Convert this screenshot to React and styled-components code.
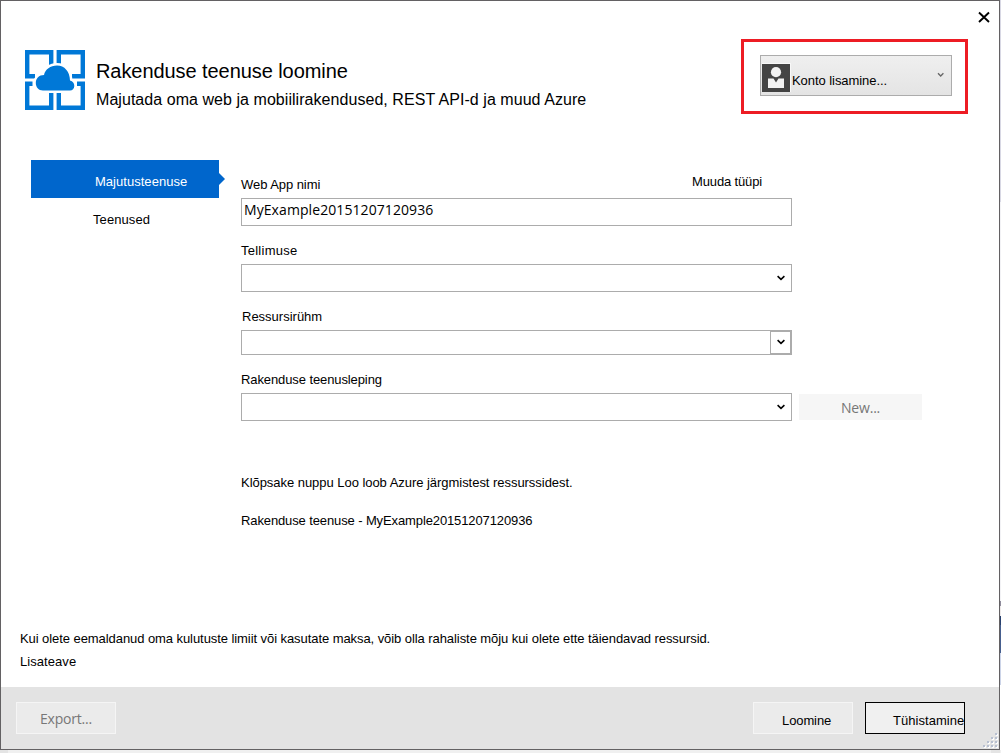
import React from "react";
import styled, { createGlobalStyle } from "styled-components";

const GlobalStyle = createGlobalStyle`
  * { box-sizing: border-box; }
  body { margin: 0; background: #f0f0f0; overflow: hidden; }
`;

const Screen = styled.div`
  display: grid;
  grid-template-columns: 1000px 1px;
  grid-template-rows: 750px 3px;
  width: 1001px;
  height: 753px;
  background: #f0f0f0;
  font-family: "Liberation Sans", Arial, sans-serif;
  font-size: 13px;
  color: #000;
`;

const Dialog = styled.main`
  display: flex;
  flex-direction: column;
  border: 1px solid #636163;
  background: #fff;
  position: relative;
`;

const BackdropEdge = styled.div`
  background: linear-gradient(
    #d8d8e4 0 202px, #f2f2f5 202px 601px, #8f8c9c 601px 606px, #eeeaea 606px 616px,
    #29416f 616px 625px, #465f8f 625px 653px, #ccd4e8 653px 685px, #fff 685px
  );
`;

const BackdropBottom = styled.div`
  border-left: 8px solid #e4e4e4;
  border-right: 9px solid #e4e4e4;
  background: #f0f0f0;
`;

const Text = styled.span`
  display: block;
  white-space: pre;
  line-height: ${(p) => p.$line || 16}px;
  font-size: ${(p) => p.$size || 13}px;
  letter-spacing: ${(p) => p.$track || 0}px;
`;

const Title = styled(Text)`
  margin: 0;
  font-weight: 400;
`;

const Segoe = styled(Text)`
  font-family: "Open Sans", "Noto Sans", sans-serif;
  color: ${(p) => p.$color || "#000"};
`;

const Header = styled.header`
  display: flex;
  align-items: flex-start;
  height: 159px;
  padding-left: 24px;
`;

const Logo = styled.svg`
  width: 60px;
  height: 60px;
  margin-top: 49px;
`;

const Heading = styled.div`
  display: flex;
  flex-direction: column;
  gap: 7px;
  margin: 58px 0 0 11px;
`;

const AccountFrame = styled.div`
  width: 227px;
  height: 75px;
  margin: 38px 31px 0 auto;
  padding: 13px 16px;
  border: 3px solid #ed1c24;
`;

const AccountButton = styled.button`
  display: flex;
  width: 192px;
  height: 41px;
  padding: 7px 6px 0 1px;
  border: 1px solid #acacac;
  background: linear-gradient(#efefef, #e4e4e4);
  font: inherit;
  color: #000;
  text-align: left;

  ${Text} { margin: 10px 0 0 1px; }
`;

const Avatar = styled.svg`
  width: 29px;
  height: 29px;
  flex: none;
`;

const AccountChevron = styled.svg`
  width: 8px;
  height: 6px;
  margin: 9px 0 0 auto;
`;

const CloseButton = styled.button`
  position: absolute;
  top: 10px;
  right: 8px;
  width: 14px;
  height: 13px;
  padding: 0;
  border: 0;
  background: none;
  line-height: 0;
`;

const Body = styled.div`
  display: flex;
  height: 471px;
  padding-left: 30px;
`;

const Tabs = styled.nav`
  width: 188px;
  margin-right: 22px;
`;

const Tab = styled.div`
  position: relative;
  height: 38px;
  padding: ${(p) => (p.$active ? "14px 0 0 64px" : "14px 0 0 62px")};
  background: ${(p) => (p.$active ? "#0066cc" : "transparent")};
  color: ${(p) => (p.$active ? "#fff" : "#000")};

  &::after {
    content: "";
    display: ${(p) => (p.$active ? "block" : "none")};
    position: absolute;
    left: 188px;
    top: 13px;
    border: solid transparent;
    border-width: 6px 0 6px 6px;
    border-left-color: #0066cc;
  }
`;

const Form = styled.section`
  display: flex;
  flex-direction: column;
`;

const Field = styled.div`
  width: 551px;
  margin-top: 17px;
`;

const LabelRow = styled.div`
  display: flex;
  justify-content: space-between;
  align-items: flex-start;
  height: 21px;
  padding-left: ${(p) => p.$indent || 0}px;
`;

const ChangeType = styled(Text)`
  margin: -3px 30px 0 0;
`;

const Control = styled.div`
  display: flex;
  width: 551px;
  height: ${(p) => p.$height || 28}px;
  padding-left: 2px;
  border: 1px solid #acacac;
  background: #fff;
`;

const Arrow = styled.span`
  display: flex;
  align-items: center;
  justify-content: center;
  width: ${(p) => (p.$boxed ? 21 : 22)}px;
  margin-left: auto;
  padding: ${(p) => (p.$boxed ? "0 0 1px" : "0 0 0 1px")};
  border: 1px solid ${(p) => (p.$boxed ? "#acacac" : "transparent")};
`;

const PlanRow = styled.div`
  display: flex;
  gap: 7px;
  width: 690px;
`;

const NewButton = styled.div`
  width: 123px;
  height: 26px;
  margin-top: 1px;
  padding: 3px 0 0 42px;
  background: #f6f6f6;
`;

const Summary = styled.div`
  display: flex;
  flex-direction: column;
  gap: 22px;
  margin-top: 54px;
`;

const Notice = styled.div`
  display: flex;
  flex-direction: column;
  gap: 7px;
  height: 56px;
  padding: 0 0 0 19px;
`;

const Footer = styled.footer`
  display: flex;
  height: 62px;
  padding: 15px 34px 0 15px;
  background: #e3e3e3;
`;

const FooterButton = styled.div`
  width: 100px;
  height: 32px;
  padding: ${(p) => p.$pad};
  margin-left: ${(p) => p.$left || "0"};
  border: 1px solid ${(p) => (p.$focused ? "#000" : "#f5f5f5")};
  background: ${(p) => (p.$focused ? "#f0f0f0" : "#ebebeb")};
`;

const Grip = styled.svg`
  position: absolute;
  right: 1px;
  bottom: 1px;
  width: 15px;
  height: 15px;
`;

const DownArrow = () => (
  <svg width="8" height="6" viewBox="0 0 8 6">
    <path d="M0.6 1.1 4 4.3 7.4 1.1" fill="none" stroke="#000" strokeWidth="1.6" />
  </svg>
);

const AppServiceLogo = () => (
  <Logo viewBox="0 0 60 60">
    <g fill="none" stroke="#0078d7" strokeWidth="4.4">
      <path d="M26.2 15V2.2H2.2V26.2H10" />
      <path d="M33.8 17V2.2H57.8V26.2H47" />
      <path d="M7.5 33.8H2.2V57.8H26.2V42" />
      <path d="M52 33.8H57.8V57.8H33.8V42" />
    </g>
    <path
      d="M18 40.5C13.5 40.5 10.8 37 10.8 33C10.8 28.5 14 25 19 25C20 19.5 25.5 15.5 32 15.5C39.5 15.5 44.8 21.5 45 30.5C47.8 31.2 49.3 33.2 49.3 36C49.3 38.5 47.5 40.5 45 40.5Z"
      fill="#0078d7"
      stroke="#fff"
      strokeWidth="4.8"
      paintOrder="stroke"
    />
  </Logo>
);

const gripDots = [[12, 0], [8, 4], [12, 4], [4, 8], [8, 8], [12, 8], [0, 12], [4, 12], [8, 12], [12, 12]];

export default function App() {
  return (
    <Screen>
      <GlobalStyle />
      <Dialog>
        <Header>
          <AppServiceLogo />
          <Heading>
            <Title as="h1" $size={20} $line={24} $track={-0.07}>Rakenduse teenuse loomine</Title>
            <Text $size={16} $line={20} $track={0.05}>Majutada oma web ja mobiilirakendused, REST API-d ja muud Azure</Text>
          </Heading>
          <AccountFrame>
            <AccountButton>
              <Avatar viewBox="0 0 29 29">
                <path d="M0 0H29V29H0Z" fill="#f8f8f8" />
                <path d="M0 1H28V29H0Z" fill="#444" />
                <circle cx="14" cy="9.2" r="5.1" fill="#f2f2f2" />
                <path d="M6 15.5H11.5L14 19.5L16.5 15.5H22V25H6Z" fill="#f2f2f2" />
              </Avatar>
              <Text $track={-0.06}>Konto lisamine...</Text>
              <AccountChevron viewBox="0 0 8 6">
                <path d="M1 1.2 3.7 4 6.4 1.2" fill="none" stroke="#666" strokeWidth="1.3" />
              </AccountChevron>
            </AccountButton>
          </AccountFrame>
        </Header>
        <CloseButton aria-label="Close">
          <svg width="14" height="13" viewBox="0 0 14 13">
            <path d="M2 1.5 12 11M12 1.5 2 11" stroke="#000" strokeWidth="1.9" />
          </svg>
        </CloseButton>
        <Body>
          <Tabs>
            <Tab $active><Text $track={0.03}>Majutusteenuse</Text></Tab>
            <Tab><Text $track={0.08}>Teenused</Text></Tab>
          </Tabs>
          <Form>
            <Field>
              <LabelRow>
                <Text $track={-0.06}>Web App nimi</Text>
                <ChangeType $track={-0.15}>Muuda tüüpi</ChangeType>
              </LabelRow>
              <Control><Segoe $size={14} $line={22} $track={0.08}>MyExample20151207120936</Segoe></Control>
            </Field>
            <Field>
              <LabelRow><Text $track={0.25}>Tellimuse</Text></LabelRow>
              <Control><Arrow><DownArrow /></Arrow></Control>
            </Field>
            <Field>
              <LabelRow $indent={1}><Text>Ressursirühm</Text></LabelRow>
              <Control $height={25}><Arrow $boxed><DownArrow /></Arrow></Control>
            </Field>
            <Field>
              <LabelRow><Text $track={-0.1}>Rakenduse teenusleping</Text></LabelRow>
              <PlanRow>
                <Control><Arrow><DownArrow /></Arrow></Control>
                <NewButton><Segoe $size={14} $line={22} $track={-0.2} $color="#777">New...</Segoe></NewButton>
              </PlanRow>
            </Field>
            <Summary>
              <Text $track={-0.04}>Klõpsake nuppu Loo loob Azure järgmistest ressurssidest.</Text>
              <Text $track={-0.115}>Rakenduse teenuse - MyExample20151207120936</Text>
            </Summary>
          </Form>
        </Body>
        <Notice>
          <Text $track={-0.07}>Kui olete eemaldanud oma kulutuste limiit või kasutate maksa, võib olla rahaliste mõju kui olete ette täiendavad ressursid.</Text>
          <Text $track={0.06}>Lisateave</Text>
        </Notice>
        <Footer>
          <FooterButton $pad="5px 0 0 23px"><Segoe $size={14} $line={22} $track={-0.2} $color="#777">Export...</Segoe></FooterButton>
          <FooterButton $left="auto" $pad="10px 0 0 28px"><Text $track={-0.1}>Loomine</Text></FooterButton>
          <FooterButton $focused $left="12px" $pad="10px 0 0 27px"><Text $track={0.05}>Tühistamine</Text></FooterButton>
        </Footer>
        <Grip viewBox="0 0 15 15">
          {gripDots.map(([x, y]) => (
            <g key={`${x}-${y}`}>
              <rect x={x + 1} y={y + 1} width="2" height="2" fill="#fff" />
              <rect x={x} y={y} width="2" height="2" fill="#b8c0d0" />
            </g>
          ))}
        </Grip>
      </Dialog>
      <BackdropEdge />
      <BackdropBottom />
    </Screen>
  );
}
